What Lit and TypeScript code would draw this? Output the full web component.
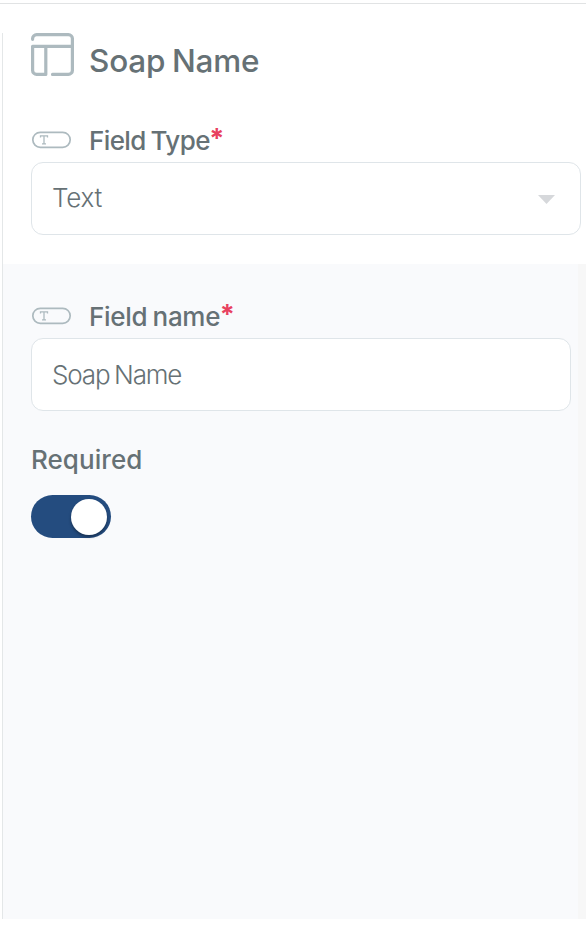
import { LitElement, html, css } from "lit";
import { customElement, property } from "lit/decorators.js";

@customElement("field-label")
class FieldLabel extends LitElement {
  @property() text = "";
  static styles = css`
    :host { display: flex; height: 32px; align-items: flex-start; }
    .icon { width: 41px; height: 19px; margin-top: 5px; margin-right: 17px; flex: none; display: block; }
    .text { font-size: 26px; line-height: 32px; font-weight: 500; white-space: nowrap; letter-spacing: var(--label-spacing, -0.2px); word-spacing: -1.5px; }
    .star { color: #e8415f; font-size: 27px; line-height: 28px; font-weight: 700; margin-left: -0.5px; }
  `;
  render() {
    return html`
      <svg class="icon" viewBox="0 0 41 19" fill="none" stroke="#adbabf">
        <rect x="1.8" y="2.3" width="37.4" height="15" rx="7.5" stroke-width="1.7" />
        <path d="M9.5 7.6V5.8h7v1.8M13 5.8v8M11 13.8h4" stroke-width="1.3" />
      </svg>
      <span class="text">${this.text}</span><span class="star">*</span>
    `;
  }
}

@customElement("app-root")
class AppRoot extends LitElement {
  static styles = css`
    :host {
      display: block; box-sizing: border-box; height: 936px; background: #fff;
      padding-top: 3px; color: #667175; overflow: hidden;
      font-family: Inter, "Liberation Sans", sans-serif;
    }
    .rule { height: 1px; background: #e1e3e4; margin-bottom: 29px; }
    .panel { box-sizing: border-box; height: 886px; margin-left: 2px; border-left: 1px solid #e4e7e8; display: flex; flex-direction: column; }
    .top { box-sizing: border-box; height: 231px; padding-left: 28px; flex: none; }
    .top field-label { --label-spacing: -0.6px; }
    .bottom field-label { --label-spacing: -0.28px; }
    .head { display: flex; height: 92px; }
    .layout { width: 44px; height: 44px; margin-right: 14px; flex: none; }
    .title { font-size: 31.5px; line-height: 40px; font-weight: 500; letter-spacing: -0.2px; word-spacing: -1.5px; margin-top: 8px; white-space: nowrap; }
    .box {
      box-sizing: border-box; height: 73px; border: 1px solid #dfe5e9; border-radius: 12px; background: #fff;
      padding: 0 25px 0 20px; display: flex; align-items: center; justify-content: space-between;
      font-size: 26px; font-weight: 300; margin-top: 5px;
    }
    .select { width: 550px; }
    .input { width: 540px; }
    .value { line-height: 32px; white-space: nowrap; padding-bottom: 1px; }
    .short { letter-spacing: -0.2px; }
    .long { letter-spacing: -1.15px; word-spacing: -1.5px; margin-top: 1px; }
    .arrow { width: 17px; height: 9px; margin-top: 1px; }
    .bottom { flex: 1; display: flex; background: #f9fafc; }
    .form { flex: 1; min-width: 0; padding: 37px 0 0 28px; }
    .track { width: 8px; background: #f7f7f7; flex: none; }
    .required { font-size: 26px; line-height: 32px; font-weight: 500; margin-top: 33px; letter-spacing: 0.05px; }
    .toggle { box-sizing: border-box; width: 80px; height: 43px; border-radius: 22px; background: #244c7f; margin-top: 19px; padding: 4px; display: flex; justify-content: flex-end; }
    .knob { width: 36px; height: 36px; border-radius: 50%; background: #fff; box-shadow: 0 2px 3px rgba(0, 0, 0, 0.35); }
  `;
  render() {
    return html`
      <div class="rule"></div>
      <div class="panel">
        <div class="top">
          <div class="head">
            <svg class="layout" viewBox="0 0 44 44" fill="none" stroke="#adbabf" stroke-width="3.2" stroke-linecap="round" stroke-linejoin="round">
              <path d="M1.6 6.3V5.6a4 4 0 0 1 4-4h31.8a4 4 0 0 1 4 4v31.8a4 4 0 0 1-4 4H21.5" />
              <path d="M41.4 13.3H1.6v24.1a4 4 0 0 0 4 4h9.2V13.3" />
            </svg>
            <span class="title">Soap Name</span>
          </div>
          <field-label text="Field Type"></field-label>
          <div class="box select">
            <span class="value short">Text</span>
            <svg class="arrow" viewBox="0 0 17 9"><path d="M0 0h17L8.5 9z" fill="#d6d8db" /></svg>
          </div>
        </div>
        <div class="bottom">
          <div class="form">
            <field-label text="Field name"></field-label>
            <div class="box input"><span class="value long">Soap Name</span></div>
            <div class="required">Required</div>
            <div class="toggle"><div class="knob"></div></div>
          </div>
          <div class="track"></div>
        </div>
      </div>
    `;
  }
}
